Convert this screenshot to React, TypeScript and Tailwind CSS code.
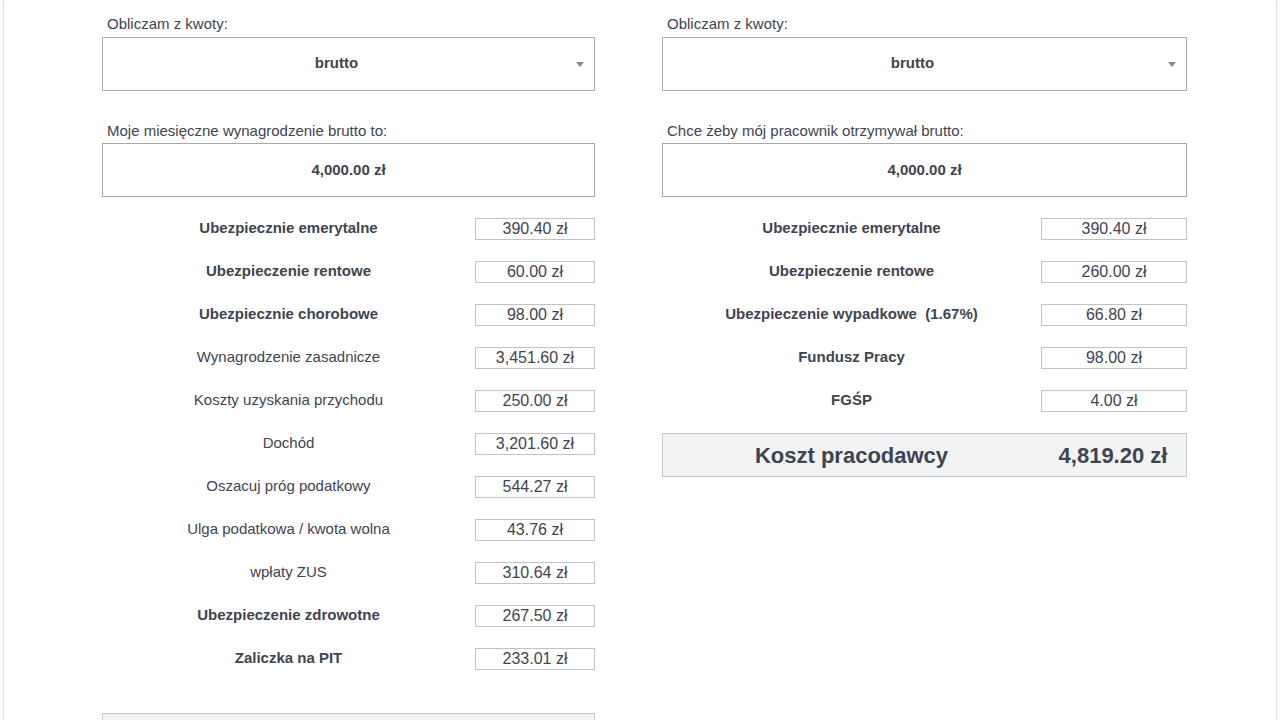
import { ReactNode } from 'react';

type Row = { label: string; value: string; bold?: boolean };

const employeeRows: Row[] = [
  { label: 'Ubezpiecznie emerytalne', value: '390.40 zł', bold: true },
  { label: 'Ubezpieczenie rentowe', value: '60.00 zł', bold: true },
  { label: 'Ubezpiecznie chorobowe', value: '98.00 zł', bold: true },
  { label: 'Wynagrodzenie zasadnicze', value: '3,451.60 zł' },
  { label: 'Koszty uzyskania przychodu', value: '250.00 zł' },
  { label: 'Dochód', value: '3,201.60 zł' },
  { label: 'Oszacuj próg podatkowy', value: '544.27 zł' },
  { label: 'Ulga podatkowa / kwota wolna', value: '43.76 zł' },
  { label: 'wpłaty ZUS', value: '310.64 zł' },
  { label: 'Ubezpieczenie zdrowotne', value: '267.50 zł', bold: true },
  { label: 'Zaliczka na PIT', value: '233.01 zł', bold: true },
];

const employerRows: Row[] = [
  { label: 'Ubezpiecznie emerytalne', value: '390.40 zł', bold: true },
  { label: 'Ubezpieczenie rentowe', value: '260.00 zł', bold: true },
  { label: 'Ubezpieczenie wypadkowe  (1.67%)', value: '66.80 zł', bold: true },
  { label: 'Fundusz Pracy', value: '98.00 zł', bold: true },
  { label: 'FGŚP', value: '4.00 zł', bold: true },
];

function FieldLabel({ children }: { children: ReactNode }) {
  return (
    <div className="h-[18px] pl-[5px] text-[15px] leading-[18px] text-[#3f4451] whitespace-pre">
      {children}
    </div>
  );
}

function SelectBox() {
  return (
    <div className="mt-[4px] h-[54px] pr-[24px] pb-[1px] border border-[#a9a9a9] bg-white flex items-center justify-center relative">
      <span className="text-[15px] font-bold text-[#3f4451]">brutto</span>
      <span className="absolute right-[10px] top-[24px] w-0 h-0 border-l-[4px] border-r-[4px] border-t-[5px] border-l-transparent border-r-transparent border-t-[#8a8a8a]" />
    </div>
  );
}

function AmountBox({ value }: { value: string }) {
  return (
    <div className="mt-[3px] h-[54px] border border-[#a9a9a9] bg-white flex items-center justify-center">
      <span className="text-[15px] font-bold text-[#3f4451]">{value}</span>
    </div>
  );
}

function ResultRow({ row, valueWidth }: { row: Row; valueWidth: string }) {
  return (
    <div className="h-[43px] flex items-center">
      <div
        className={
          'flex-1 text-center text-[15px] text-[#3f4451] whitespace-pre ' +
          (row.bold ? 'font-bold' : '')
        }
      >
        {row.label}
      </div>
      <div
        className={
          valueWidth +
          ' h-[22px] border border-[#c2c2c2] bg-white flex items-center justify-center text-[16px] text-[#3f4451]'
        }
      >
        {row.value}
      </div>
    </div>
  );
}

export default function App() {
  return (
    <div className="h-[720px] overflow-hidden bg-white font-['Liberation_Sans',Arial,sans-serif]">
      <div className="mx-[3px] h-[740px] border-x border-[#e3e3e3] shadow-[0_0_3px_rgba(0,0,0,0.06)] flex">
        {/* employee column */}
        <div className="ml-[98px] w-[493px] pt-[15px]">
          <FieldLabel>Obliczam z kwoty:</FieldLabel>
          <SelectBox />
          <div className="mt-[31px]">
            <FieldLabel>Moje miesięczne wynagrodzenie brutto to:</FieldLabel>
            <AmountBox value="4,000.00 zł" />
          </div>
          <div className="mt-[10px]">
            {employeeRows.map((r) => (
              <ResultRow key={r.label} row={r} valueWidth="w-[120px]" />
            ))}
          </div>
          <div className="mt-[33px] h-[40px] border border-[#c8c8c8] bg-[#f1f3f5]" />
        </div>

        {/* employer column */}
        <div className="ml-[67px] w-[525px] pt-[15px]">
          <FieldLabel>Obliczam z kwoty:</FieldLabel>
          <SelectBox />
          <div className="mt-[31px]">
            <FieldLabel>Chce żeby mój pracownik otrzymywał brutto:</FieldLabel>
            <AmountBox value="4,000.00 zł" />
          </div>
          <div className="mt-[10px]">
            {employerRows.map((r) => (
              <ResultRow key={r.label} row={r} valueWidth="w-[146px]" />
            ))}
          </div>
          <div className="mt-[11px] h-[44px] border border-[#c8c8c8] bg-[#f1f3f5] flex items-center">
            <div className="flex-1 text-center text-[22px] font-bold text-[#3f4451]">
              Koszt pracodawcy
            </div>
            <div className="w-[146px] text-center text-[22px] font-bold text-[#3f4451]">
              4,819.20 zł
            </div>
          </div>
        </div>
      </div>
    </div>
  );
}
